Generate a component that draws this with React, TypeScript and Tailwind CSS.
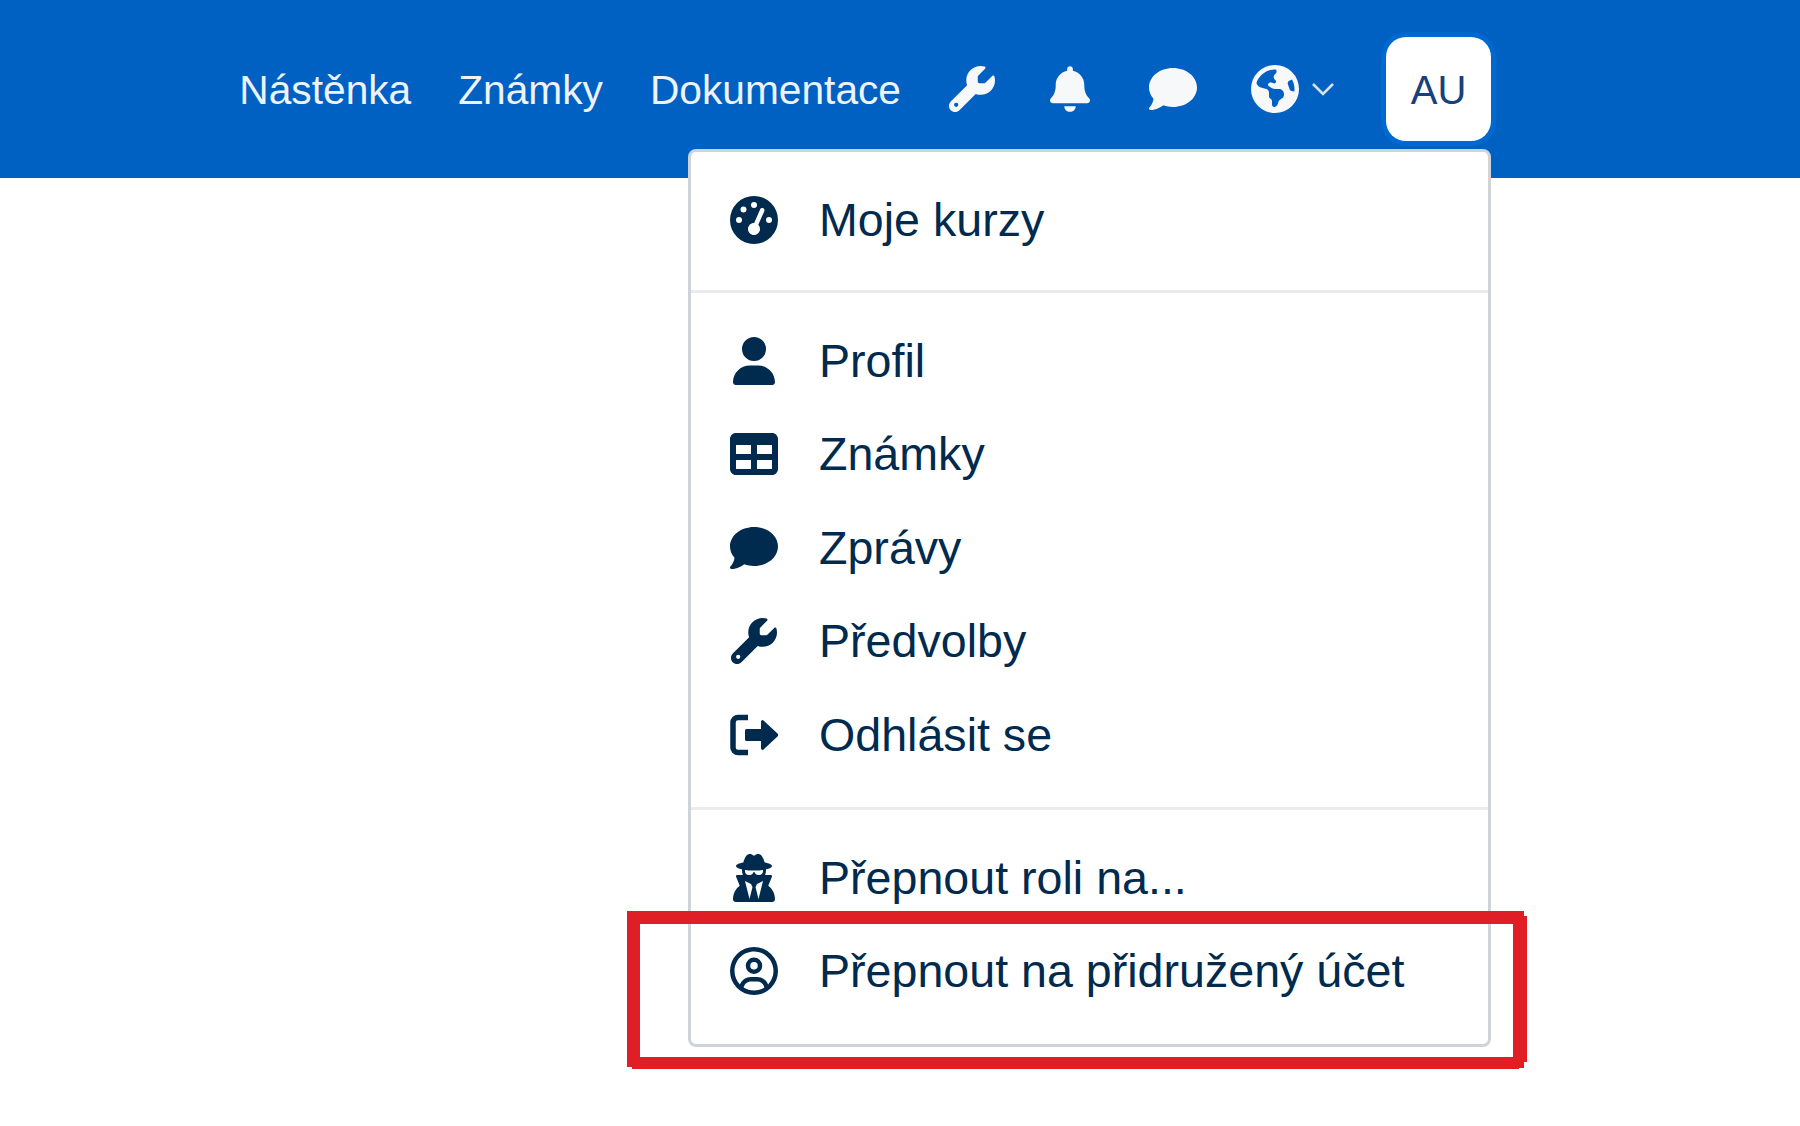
import React from "react";
import { FaGaugeHigh, FaUser, FaTable, FaComment, FaWrench, FaUserSecret, FaRegCircleUser, FaBell, FaEarthAmericas } from "react-icons/fa6";

type Item = { label: string; Icon: React.ComponentType<{ className?: string }>; small?: boolean };

function SignOut({ className }: { className?: string }) {
  return (
    <svg viewBox="0 0 48 48" className={className} fill="currentColor">
      <path d="M18 6.5H8a5 5 0 0 0-5 5v25a5 5 0 0 0 5 5h10" fill="none" stroke="currentColor" strokeWidth="5.5" />
      <path d="M15 19.5a1.500 1.500 0 0 1 1.500-1.500H31v-7.500a1.500 1.500 0 0 1 2.500-1L47.500 22.500a2 2 0 0 1 0 3L33.500 38.500a1.500 1.500 0 0 1-2.500-1V30H16.500a1.500 1.500 0 0 1-1.500-1.500Z" />
    </svg>
  );
}

const first: Item[] = [{ label: "Moje kurzy", Icon: FaGaugeHigh }];
const second: Item[] = [
  { label: "Profil", Icon: FaUser },
  { label: "Známky", Icon: FaTable },
  { label: "Zprávy", Icon: FaComment },
  { label: "Předvolby", Icon: FaWrench, small: true },
  { label: "Odhlásit se", Icon: SignOut },
];
const third: Item[] = [
  { label: "Přepnout roli na...", Icon: FaUserSecret },
  { label: "Přepnout na přidružený účet", Icon: FaRegCircleUser },
];

function Row({ label, Icon, small }: Item) {
  return (
    <a className="flex h-[93.5px] items-center pl-[39px]">
      <span className="flex w-[48px] justify-center">
        <Icon className={small ? "h-[46px] w-[46px]" : "h-[48px] w-[48px]"} />
      </span>
      <span className="ml-[41px] pt-[1px] text-[46.6px] leading-none whitespace-nowrap">{label}</span>
    </a>
  );
}

export default function App() {
  return (
    <div className="relative h-[1126px] w-[1800px] overflow-hidden bg-white font-['Liberation_Sans',Arial,sans-serif]">
      <header className="flex h-[178px] items-center justify-end bg-[#0061c3] pr-[309px] text-[#eef3f9]">
        <nav className="flex items-center gap-[47px] pt-[2px] text-[40.7px] leading-none">
          <a>Nástěnka</a>
          <a>Známky</a>
          <a>Dokumentace</a>
        </nav>
        <div className="ml-[48px] flex items-center text-[#f7f8fa]">
          <FaWrench className="h-[46px] w-[46px]" />
          <FaBell className="ml-[55px] h-[46px] w-[40px]" />
          <FaComment className="ml-[59px] h-[48px] w-[48px]" />
          <FaEarthAmericas className="ml-[54px] h-[48px] w-[48px]" />
          <svg viewBox="0 0 24 16" className="ml-[12px] h-[16px] w-[24px]" fill="none" stroke="#d5e4f3" strokeWidth="2.6">
            <path d="M2 3l10 10L22 3" />
          </svg>
        </div>
        <button className="ml-[51px] flex h-[104px] w-[105px] items-center justify-center rounded-[20px] bg-white pt-[2px] text-[40px] text-[#16417a] ring-[5px] ring-[#0068d1]">
          AU
        </button>
      </header>

      <div className="absolute left-[688px] top-[149px] w-[803px] rounded-[8px] border-[3px] border-[#ced4da] bg-white pb-[25.5px] pt-[21px] text-[#012a4f]">
        {first.map((i) => <Row key={i.label} {...i} />)}
        <div className="mb-[21.5px] mt-[23px] h-[3px] bg-[#e9ecef]" />
        {second.map((i) => <Row key={i.label} {...i} />)}
        <div className="mb-[21.5px] mt-[25px] h-[3px] bg-[#e9ecef]" />
        {third.map((i) => <Row key={i.label} {...i} />)}
      </div>

      <svg className="absolute left-0 top-0" width="1800" height="1126" fill="#e01e26" fillRule="evenodd">
        <path d="M627 911H1524V916H1527V1062H1524V1068H1519V1069H632V1067H627ZM640 924V1057H1513V924Z" />
      </svg>
    </div>
  );
}
